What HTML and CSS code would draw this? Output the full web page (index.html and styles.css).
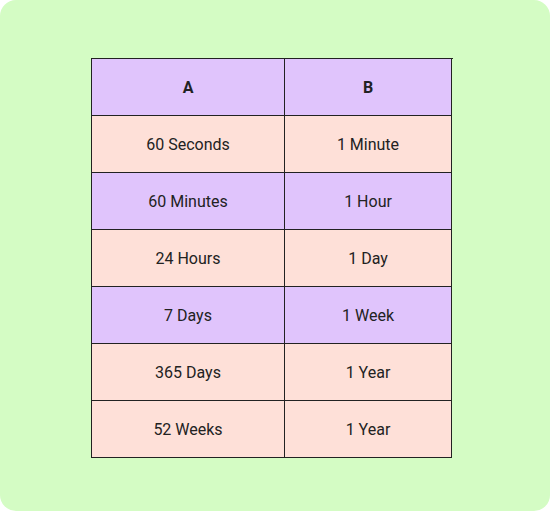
FILE: index.html
```html
<!DOCTYPE html>
<html>
<head>
<meta charset="utf-8">
<link rel="stylesheet" href="styles.css">
</head>
<body>
<div class="card">
  <div class="grid">
    <div class="cell head">A</div><div class="cell head">B</div>
    <div class="cell pink">60 Seconds</div><div class="cell pink">1 Minute</div>
    <div class="cell purple">60 Minutes</div><div class="cell purple">1 Hour</div>
    <div class="cell pink">24 Hours</div><div class="cell pink">1 Day</div>
    <div class="cell purple">7 Days</div><div class="cell purple">1 Week</div>
    <div class="cell pink">365 Days</div><div class="cell pink">1 Year</div>
    <div class="cell pink">52 Weeks</div><div class="cell pink">1 Year</div>
  </div>
</div>
</body>
</html>
```

FILE: styles.css
```css
html, body {
  margin: 0;
  padding: 0;
  background: #ffffff;
}
.card {
  width: 550px;
  height: 511px;
  box-sizing: border-box;
  background: #d4fcc4;
  border-radius: 16px;
  padding: 58px 0 0 91px;
}
.grid {
  display: grid;
  grid-template-columns: 193px 167px;
  grid-auto-rows: 57px;
  width: 361px;
  border-top: 1px solid #222;
  border-left: 1px solid #222;
  font-family: Roboto, "Liberation Sans", sans-serif;
  font-size: 16px;
  color: #222;
}
.cell {
  display: flex;
  align-items: center;
  justify-content: center;
  border-right: 1px solid #222;
  border-bottom: 1px solid #222;
}
.head {
  background: #e0c4fc;
  font-weight: 700;
}
.purple {
  background: #e0c4fc;
}
.pink {
  background: #fee0d8;
}
```
